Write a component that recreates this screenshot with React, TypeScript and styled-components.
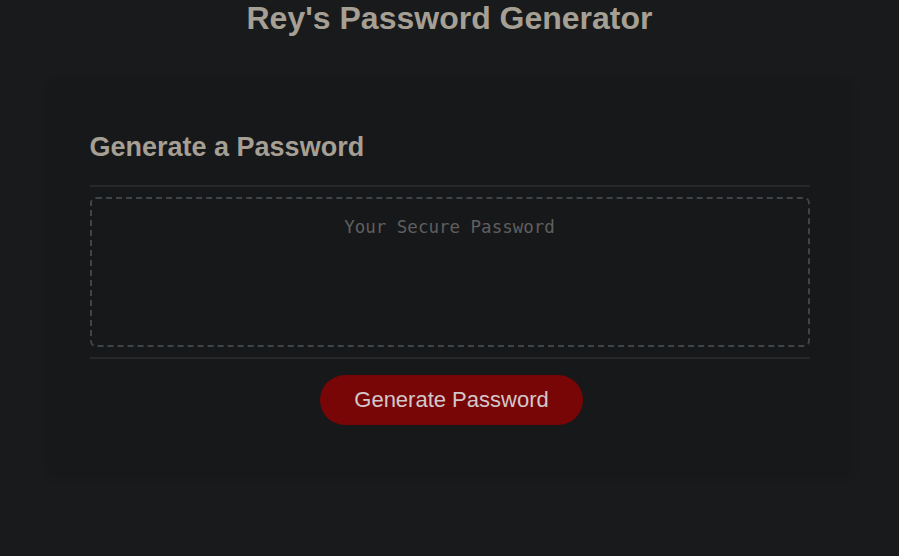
import * as React from "react";
import styled, { createGlobalStyle } from "styled-components";

const GlobalStyle = createGlobalStyle`
  html, body {
    margin: 0;
    padding: 0;
    background: #181a1b;
  }
  body {
    font-family: "Liberation Sans", Arial, sans-serif;
    color: #a8a297;
  }
`;

export default function App(): JSX.Element {
    return (
        <>
            <GlobalStyle />
            <Wrapper>
                <Title>Rey's Password Generator</Title>
                <Card>
                    <CardHeader>
                        <Heading>Generate a Password</Heading>
                    </CardHeader>
                    <Divider />
                    <PasswordBox
                        readOnly
                        placeholder="Your Secure Password"
                        aria-label="Generated Password"
                    />
                    <Divider />
                    <CardFooter>
                        <Button type="button">Generate Password</Button>
                    </CardFooter>
                </Card>
            </Wrapper>
        </>
    );
}

const Wrapper = styled.div`
  padding: 0 28px;
  min-height: 556px;
  box-sizing: border-box;
`;

const Title = styled.h1`
  margin: 0;
  font-size: 32px;
  line-height: 37px;
  font-weight: bold;
  text-align: center;
  color: #a59f94;
`;

const Card = styled.div`
  max-width: 800px;
  margin: 43px auto 0;
  padding: 30px 40px;
  box-sizing: border-box;
  background: #17181a;
  border-radius: 5px;
  box-shadow: rgba(0, 0, 0, 0.15) 0 2px 8px 0;
`;

const CardHeader = styled.div`
  padding-top: 22px;
  padding-bottom: 22px;
`;

const Heading = styled.h2`
  margin: 0;
  font-size: 27px;
  line-height: 31px;
  font-weight: bold;
  color: #a59f94;
`;

const Divider = styled.div`
  height: 2px;
  background: #26292b;
`;

const PasswordBox = styled.textarea`
  display: block;
  width: 100%;
  height: 150px;
  box-sizing: border-box;
  margin: 10px 0;
  padding: 15px 15px 85px;
  background: transparent;
  border: 2px dashed #3e4448;
  border-radius: 6px;
  resize: none;
  overflow: hidden;
  outline: none;
  text-align: center;
  font-family: "DejaVu Sans Mono", "Liberation Mono", monospace;
  font-size: 17.5px;
  line-height: 26px;
  color: #a8a297;

  &::placeholder {
    color: #5f5f5f;
  }
`;

const CardFooter = styled.div`
  text-align: center;
  padding-bottom: 2px;
`;

const Button = styled.button`
  display: inline-block;
  margin: 16px 16px 16px 20px;
  padding: 14px 34px;
  border: none;
  border-radius: 25px;
  background: #790606;
  color: #d2c8cb;
  font-family: "Liberation Sans", Arial, sans-serif;
  font-size: 22px;
  line-height: 22px;
  cursor: pointer;
`;
